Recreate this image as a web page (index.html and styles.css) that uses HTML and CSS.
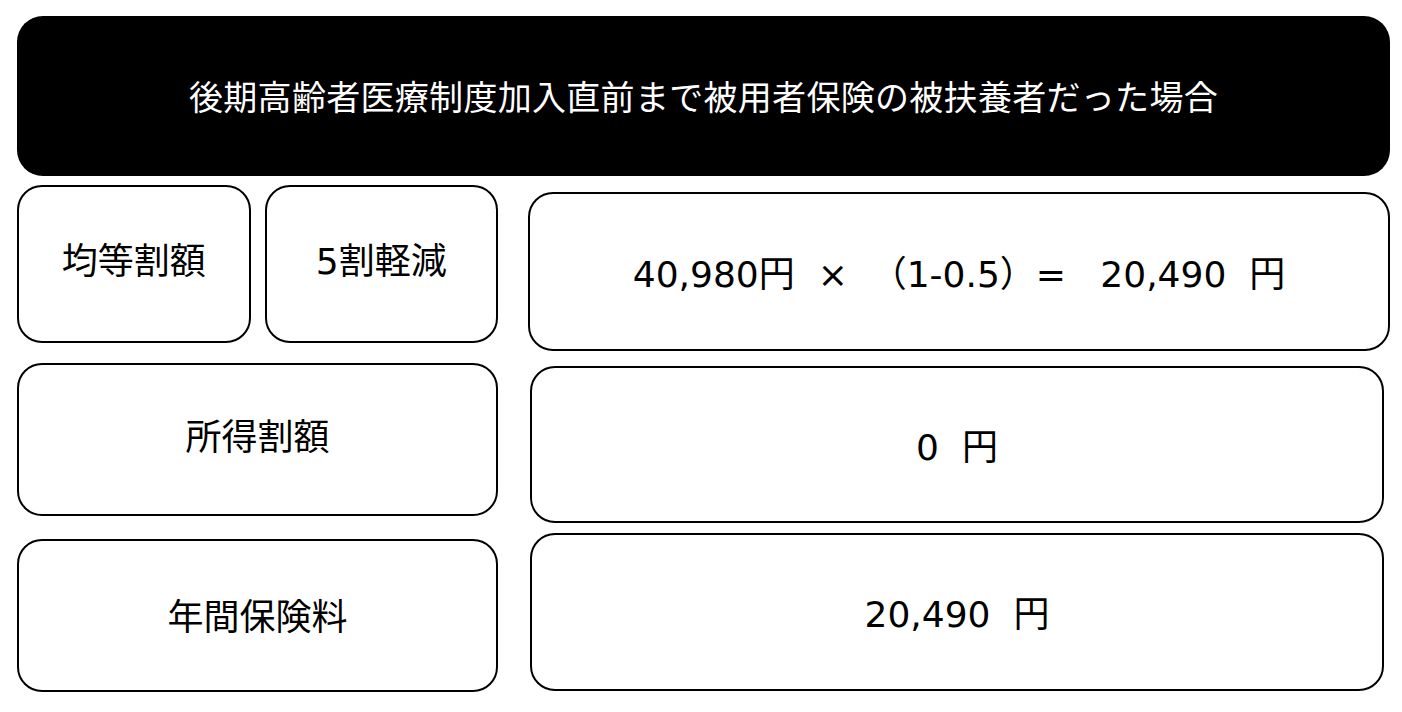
FILE: index.html
```html
<!DOCTYPE html>
<html lang="ja">
<head>
<meta charset="utf-8">
<title>後期高齢者医療 保険料</title>
<link rel="stylesheet" href="styles.css">
</head>
<body>
<main class="sheet">
  <header class="title">後期高齢者医療制度加入直前まで被用者保険の被扶養者だった場合</header>
  <section class="row row-1">
    <div class="left pair">
      <div class="box box-half">均等割額</div>
      <div class="box box-half">5割軽減</div>
    </div>
    <div class="box value value-1">40,980円  ×  （1-0.5）=   20,490  円</div>
  </section>
  <section class="row row-2">
    <div class="box left label-2">所得割額</div>
    <div class="box value value-2">0  円</div>
  </section>
  <section class="row row-3">
    <div class="box left label-3">年間保険料</div>
    <div class="box value value-3">20,490  円</div>
  </section>
</main>
</body>
</html>
```

FILE: styles.css
```css
html, body {
  margin: 0;
  padding: 0;
  background: #ffffff;
}

body {
  font-family: "DejaVu Sans", "Noto Sans CJK JP", sans-serif;
  color: #000000;
}

.sheet {
  width: 1402px;
  height: 712px;
  padding: 16px 0 0 17px;
  box-sizing: border-box;
  display: flex;
  flex-direction: column;
}

.title {
  width: 1373px;
  height: 160px;
  box-sizing: border-box;
  background: #000000;
  color: #ffffff;
  border-radius: 26px;
  display: flex;
  align-items: center;
  justify-content: center;
  font-family: "Noto Sans CJK JP", sans-serif;
  font-size: 34px;
  letter-spacing: 0.3px;
  padding-bottom: 2px;
}

.row {
  display: flex;
  align-items: flex-start;
}

.row-1 { margin-top: 9px; }
.row-2 { margin-top: 12px; }
.row-3 { margin-top: 10px; }

.box {
  box-sizing: border-box;
  border: 2px solid #000000;
  border-radius: 25px;
  display: flex;
  align-items: center;
  justify-content: center;
  font-size: 36px;
  white-space: pre;
  background: #ffffff;
}

.left {
  width: 481px;
  flex: none;
}

.pair {
  display: flex;
  gap: 14px;
}

.box-half {
  width: 234px;
  height: 158px;
  padding-bottom: 12px;
}

.value-1 {
  margin-left: 30px;
  margin-top: 7px;
  width: 862px;
  height: 159px;
  padding-bottom: 2px;
}

.label-2 {
  height: 153px;
  padding-bottom: 12px;
}

.value-2 {
  margin-left: 32px;
  margin-top: 3px;
  width: 854px;
  height: 157px;
  padding-bottom: 2px;
}

.label-3 {
  margin-top: 6px;
  height: 153px;
  padding-bottom: 4px;
}

.value-3 {
  margin-left: 32px;
  width: 854px;
  height: 158px;
  padding-bottom: 2px;
}
```
